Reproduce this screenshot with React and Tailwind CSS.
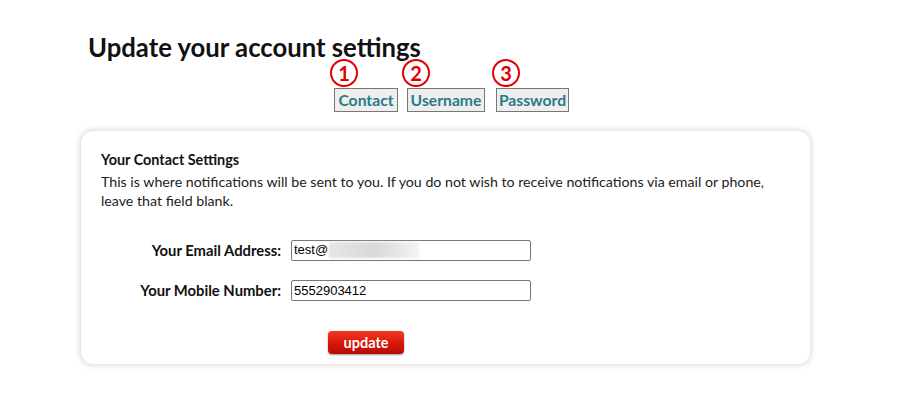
import React from "react";

function Tab({ label, num, offset, cls }) {
  return (
    <div className={"relative " + cls}>
      <div className={"absolute top-[-29px] w-[28px] h-[28px] rounded-full border-2 border-[#e00000] flex items-center justify-center text-[#e00000] font-bold text-[20px] leading-none " + offset} style={{ fontFamily: "Lato, sans-serif" }}>
        {num}
      </div>
      <div className="h-[24px] border border-[#777] bg-[#eeeeee] text-[#2a7b86] font-bold text-[15.7px] leading-[22px] text-center whitespace-nowrap">
        {label}
      </div>
    </div>
  );
}

export default function App() {
  return (
    <div className="w-[899px] h-[393px] bg-white text-[#222] overflow-hidden" style={{ fontFamily: "Lato, 'Open Sans', sans-serif" }}>
      <h1 className="pl-[88px] pt-[31px] text-[25.7px] leading-[32px] font-bold text-[#111]">
        Update your account settings
      </h1>
      <div className="flex pl-[334px] mt-[25px]">
        <Tab label="Contact" num="1" offset="left-[-4px]" cls="w-[64px]" />
        <Tab label="Username" num="2" offset="left-[-5px]" cls="w-[78px] ml-[9px]" />
        <Tab label="Password" num="3" offset="left-[-4px]" cls="w-[73px] ml-[11px]" />
      </div>
      <div className="ml-[80px] mt-[18px] w-[731px] h-[235px] rounded-[13px] bg-white border border-[#e8e8e8] shadow-[0_0_6px_rgba(0,0,0,0.16)] px-[20px] pt-[19px]">
        <div className="text-[14.4px] leading-[19px] font-bold text-[#111]">Your Contact Settings</div>
        <p className="mt-[3px] text-[14.2px] leading-[19px] text-[#222]">
          This is where notifications will be sent to you. If you do not wish to receive notifications via email or phone, leave that field blank.
        </p>
        <div className="mt-[29px] grid grid-cols-[180px_240px] gap-x-[10px] gap-y-[18px] items-center">
          <div className="text-right text-[14.8px] font-bold text-[#111]">Your Email Address:</div>
          <div className="h-[21px] border border-[#777] rounded-[2px] flex items-center pl-[2px] text-[13px] text-black" style={{ fontFamily: "'Liberation Sans', Arial, sans-serif" }}>
            <span>test@</span>
            <span className="ml-[1px] h-[16px] w-[90px] bg-gradient-to-r from-[#e6e6e6] via-[#d8d8d8] to-[#f4f4f4] blur-[1px]"></span>
          </div>
          <div className="text-right text-[14.8px] font-bold text-[#111]">Your Mobile Number:</div>
          <div className="h-[21px] border border-[#777] rounded-[2px] flex items-center pl-[2px] text-[13px] text-black" style={{ fontFamily: "'Liberation Sans', Arial, sans-serif" }}>
            5552903412
          </div>
        </div>
        <div className="mt-[29px] pl-[227px]">
          <button className="w-[76px] h-[23px] rounded-[4px] bg-gradient-to-b from-[#f2391f] via-[#d9180c] to-[#b40c06] shadow-[0_1px_2px_rgba(0,0,0,0.4)] text-white font-bold text-[14.5px] leading-[21px]">
            update
          </button>
        </div>
      </div>
    </div>
  );
}
